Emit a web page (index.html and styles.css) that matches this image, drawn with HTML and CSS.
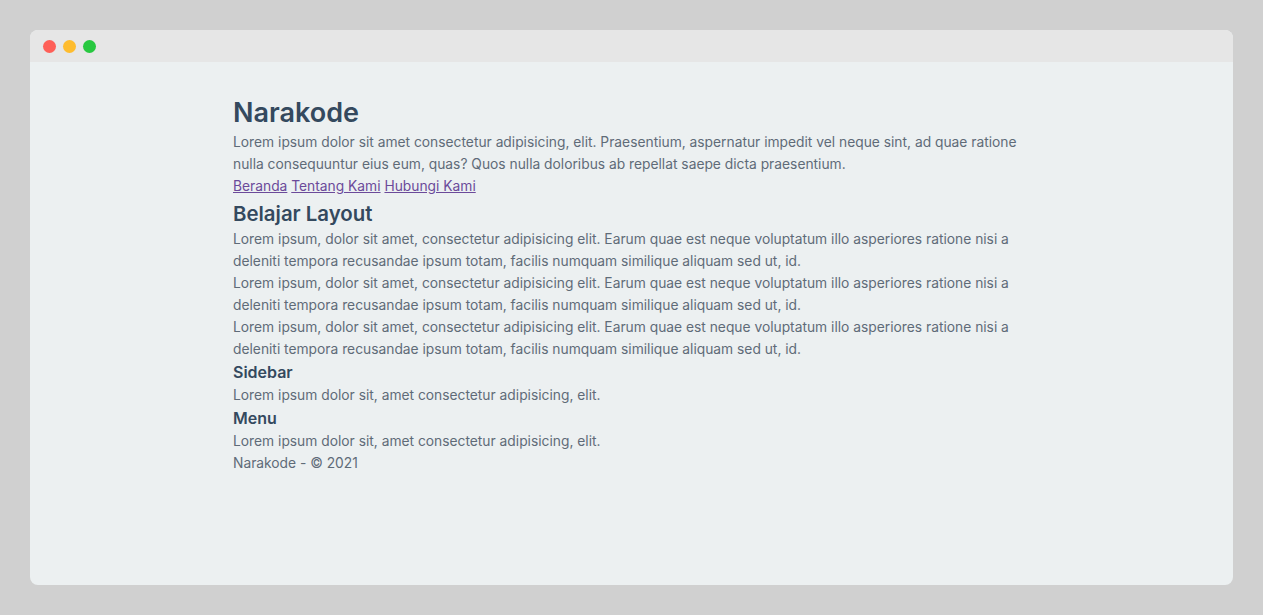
FILE: index.html
```html
<!DOCTYPE html>
<html lang="id">
<head>
<meta charset="utf-8">
<title>Narakode</title>
<link rel="stylesheet" href="styles.css">
</head>
<body>
<div class="window">
  <div class="titlebar">
    <span class="dot red"></span>
    <span class="dot yellow"></span>
    <span class="dot green"></span>
  </div>
  <div class="viewport">
    <div class="container">
      <header class="header">
        <h1 class="title">Narakode</h1>
        <p class="text">Lorem ipsum dolor sit amet consectetur adipisicing, elit. Praesentium, aspernatur impedit vel neque sint, ad quae ratione nulla consequuntur eius eum, quas? Quos nulla doloribus ab repellat saepe dicta praesentium.</p>
        <nav class="nav"><a href="#" class="link">Beranda</a> <a href="#" class="link">Tentang Kami</a> <a href="#" class="link">Hubungi Kami</a></nav>
      </header>
      <main class="main">
        <h2 class="subtitle">Belajar Layout</h2>
        <p class="text">Lorem ipsum, dolor sit amet, consectetur adipisicing elit. Earum quae est neque voluptatum illo asperiores ratione nisi a deleniti tempora recusandae ipsum totam, facilis numquam similique aliquam sed ut, id.</p>
        <p class="text">Lorem ipsum, dolor sit amet, consectetur adipisicing elit. Earum quae est neque voluptatum illo asperiores ratione nisi a deleniti tempora recusandae ipsum totam, facilis numquam similique aliquam sed ut, id.</p>
        <p class="text">Lorem ipsum, dolor sit amet, consectetur adipisicing elit. Earum quae est neque voluptatum illo asperiores ratione nisi a deleniti tempora recusandae ipsum totam, facilis numquam similique aliquam sed ut, id.</p>
      </main>
      <aside class="aside">
        <h3 class="small-title">Sidebar</h3>
        <p class="text">Lorem ipsum dolor sit, amet consectetur adipisicing, elit.</p>
      </aside>
      <aside class="aside">
        <h3 class="small-title">Menu</h3>
        <p class="text">Lorem ipsum dolor sit, amet consectetur adipisicing, elit.</p>
      </aside>
      <footer class="footer">Narakode - © 2021</footer>
    </div>
  </div>
</div>
</body>
</html>
```
FILE: styles.css
```css
html, body {
  margin: 0;
  padding: 0;
}
body {
  background: #d0d0d0;
  padding: 30px;
  height: 615px;
  box-sizing: border-box;
  font-family: Inter, "Liberation Sans", sans-serif;
}
.window {
  height: 555px;
  border-radius: 8px;
  overflow: hidden;
  background: #ecf0f1;
  display: flex;
  flex-direction: column;
}
.titlebar {
  height: 32px;
  background: #e6e6e6;
  display: flex;
  align-items: center;
  gap: 7px;
  padding-left: 13px;
  flex-shrink: 0;
}
.dot {
  width: 13px;
  height: 13px;
  border-radius: 50%;
  display: block;
}
.red { background: #fe5f57; }
.yellow { background: #febc2e; }
.green { background: #28c840; }
.viewport {
  flex: 1;
  padding-top: 33px;
}
.container {
  width: 800px;
  margin: 0 auto;
  padding-left: 3px;
  color: #5f6b78;
  font-size: 13.8px;
  line-height: 22px;
}
.title {
  margin: 0;
  font-size: 27px;
  line-height: 36px;
  font-weight: 600;
  color: #34495e;
}
.subtitle {
  margin: 0;
  margin-top: 3px;
  font-size: 20.4px;
  line-height: 28px;
  font-weight: 600;
  color: #34495e;
}
.small-title {
  margin: 0;
  font-size: 16px;
  line-height: 24px;
  font-weight: 600;
  color: #34495e;
}
.text {
  margin: 0;
}
.link {
  color: #6b4a9a;
}
.footer {
  line-height: 22px;
}
```
